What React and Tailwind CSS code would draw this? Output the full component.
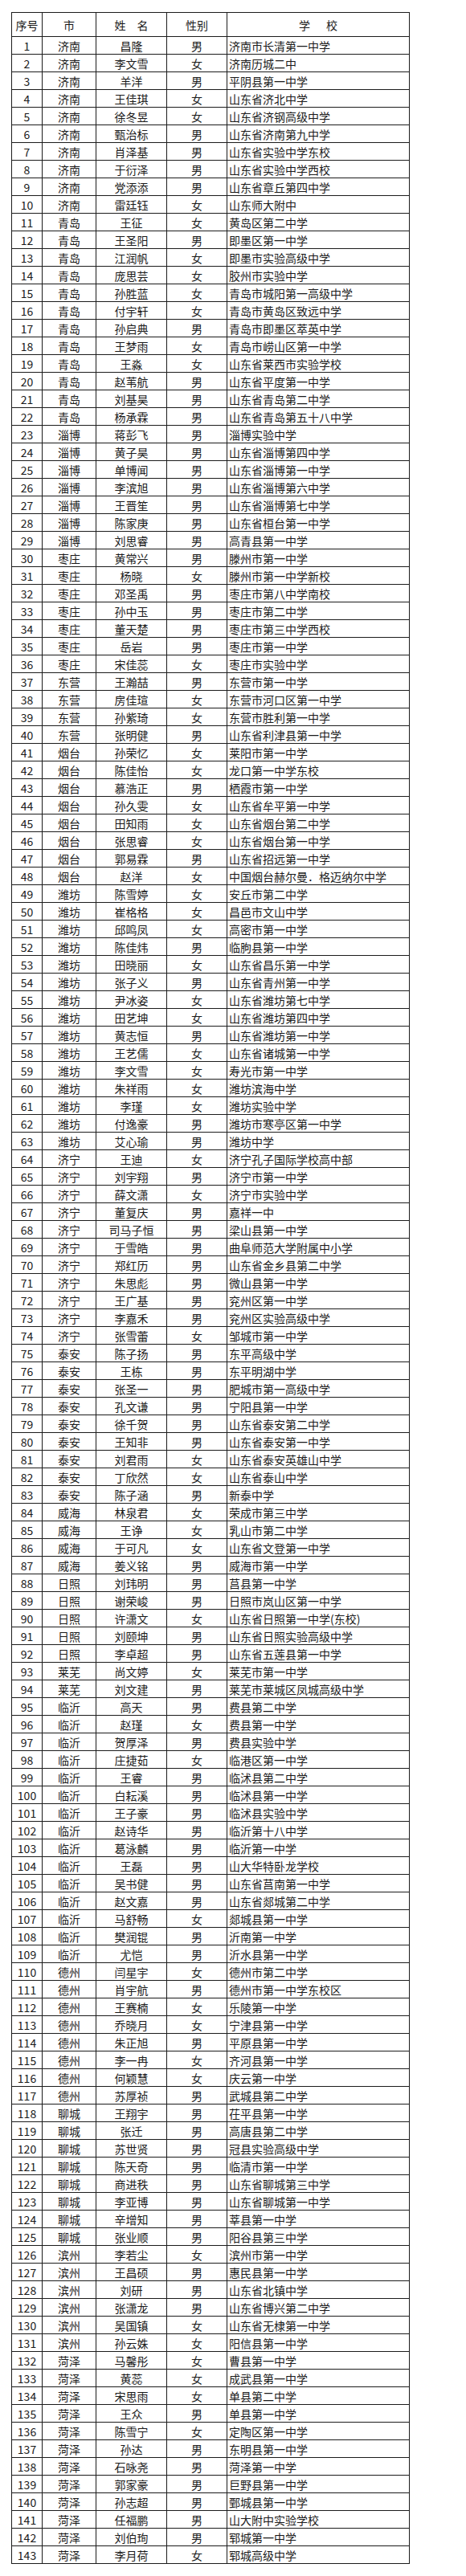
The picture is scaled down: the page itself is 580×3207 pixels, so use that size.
import React from "react";

// 城市|姓名|性别|学校
const raw = `济南|昌隆|男|济南市长清第一中学
济南|李文雪|女|济南历城二中
济南|羊洋|男|平阴县第一中学
济南|王佳琪|女|山东省济北中学
济南|徐冬昱|女|山东省济钢高级中学
济南|甄治标|男|山东省济南第九中学
济南|肖泽基|男|山东省实验中学东校
济南|于衍泽|男|山东省实验中学西校
济南|党添添|男|山东省章丘第四中学
济南|雷廷钰|女|山东师大附中
青岛|王征|女|黄岛区第二中学
青岛|王圣阳|男|即墨区第一中学
青岛|江润帆|女|即墨市实验高级中学
青岛|庞思芸|女|胶州市实验中学
青岛|孙胜蓝|女|青岛市城阳第一高级中学
青岛|付宇轩|女|青岛市黄岛区致远中学
青岛|孙启典|男|青岛市即墨区萃英中学
青岛|王梦雨|女|青岛市崂山区第一中学
青岛|王淼|女|山东省莱西市实验学校
青岛|赵苇航|男|山东省平度第一中学
青岛|刘基昊|男|山东省青岛第二中学
青岛|杨承霖|男|山东省青岛第五十八中学
淄博|蒋彭飞|男|淄博实验中学
淄博|黄子昊|男|山东省淄博第四中学
淄博|单博闻|男|山东省淄博第一中学
淄博|李滨旭|男|山东省淄博第六中学
淄博|王晋笙|男|山东省淄博第七中学
淄博|陈家庚|男|山东省桓台第一中学
淄博|刘思睿|男|高青县第一中学
枣庄|黄常兴|男|滕州市第一中学
枣庄|杨晓|女|滕州市第一中学新校
枣庄|邓圣禹|男|枣庄市第八中学南校
枣庄|孙中玉|男|枣庄市第二中学
枣庄|董天楚|男|枣庄市第三中学西校
枣庄|岳岩|男|枣庄市第一中学
枣庄|宋佳蕊|女|枣庄市实验中学
东营|王瀚喆|男|东营市第一中学
东营|房佳瑄|女|东营市河口区第一中学
东营|孙紫琦|女|东营市胜利第一中学
东营|张明健|男|山东省利津县第一中学
烟台|孙荣忆|女|莱阳市第一中学
烟台|陈佳怡|女|龙口第一中学东校
烟台|慕浩正|男|栖霞市第一中学
烟台|孙久雯|女|山东省牟平第一中学
烟台|田知雨|女|山东省烟台第二中学
烟台|张思睿|女|山东省烟台第一中学
烟台|郭易霖|男|山东省招远第一中学
烟台|赵洋|女|中国烟台赫尔曼．格迈纳尔中学
潍坊|陈雪婷|女|安丘市第二中学
潍坊|崔格格|女|昌邑市文山中学
潍坊|邱鸣凤|女|高密市第一中学
潍坊|陈佳炜|男|临朐县第一中学
潍坊|田晓丽|女|山东省昌乐第一中学
潍坊|张子义|男|山东省青州第一中学
潍坊|尹冰姿|女|山东省潍坊第七中学
潍坊|田艺坤|女|山东省潍坊第四中学
潍坊|黄志恒|男|山东省潍坊第一中学
潍坊|王艺儒|女|山东省诸城第一中学
潍坊|李文雪|女|寿光市第一中学
潍坊|朱祥雨|女|潍坊滨海中学
潍坊|李瑾|女|潍坊实验中学
潍坊|付逸豪|男|潍坊市寒亭区第一中学
潍坊|艾心瑜|男|潍坊中学
济宁|王迪|女|济宁孔子国际学校高中部
济宁|刘宇翔|男|济宁市第一中学
济宁|薛文潇|女|济宁市实验中学
济宁|董复庆|男|嘉祥一中
济宁|司马子恒|男|梁山县第一中学
济宁|于雪皓|男|曲阜师范大学附属中小学
济宁|郑红历|男|山东省金乡县第二中学
济宁|朱思彪|男|微山县第一中学
济宁|王广基|男|兖州区第一中学
济宁|李嘉禾|男|兖州区实验高级中学
济宁|张雪蕾|女|邹城市第一中学
泰安|陈子扬|男|东平高级中学
泰安|王栋|男|东平明湖中学
泰安|张圣一|男|肥城市第一高级中学
泰安|孔文谦|男|宁阳县第一中学
泰安|徐千贺|男|山东省泰安第二中学
泰安|王知非|男|山东省泰安第一中学
泰安|刘君雨|女|山东省泰安英雄山中学
泰安|丁欣然|女|山东省泰山中学
泰安|陈子涵|男|新泰中学
威海|林泉君|女|荣成市第三中学
威海|王诤|女|乳山市第二中学
威海|于可凡|女|山东省文登第一中学
威海|姜义铭|男|威海市第一中学
日照|刘玮明|男|莒县第一中学
日照|谢荣峻|男|日照市岚山区第一中学
日照|许潇文|女|山东省日照第一中学(东校)
日照|刘颐坤|男|山东省日照实验高级中学
日照|李卓超|男|山东省五莲县第一中学
莱芜|尚文婷|女|莱芜市第一中学
莱芜|刘文建|男|莱芜市莱城区凤城高级中学
临沂|高天|男|费县第二中学
临沂|赵瑾|女|费县第一中学
临沂|贺厚泽|男|费县实验中学
临沂|庄捷茹|女|临港区第一中学
临沂|王睿|男|临沭县第二中学
临沂|白耘溪|男|临沭县第一中学
临沂|王子豪|男|临沭县实验中学
临沂|赵诗华|男|临沂第十八中学
临沂|葛泳麟|男|临沂第一中学
临沂|王磊|男|山大华特卧龙学校
临沂|吴书健|男|山东省莒南第一中学
临沂|赵文嘉|男|山东省郯城第二中学
临沂|马舒畅|女|郯城县第一中学
临沂|樊润锟|男|沂南第一中学
临沂|尤恺|男|沂水县第一中学
德州|闫星宇|女|德州市第二中学
德州|肖宇航|男|德州市第一中学东校区
德州|王赛楠|女|乐陵第一中学
德州|乔晓月|女|宁津县第一中学
德州|朱正旭|男|平原县第一中学
德州|李一冉|女|齐河县第一中学
德州|何颖慧|女|庆云第一中学
德州|苏厚祯|男|武城县第二中学
聊城|王翔宇|男|茌平县第一中学
聊城|张迁|男|高唐县第二中学
聊城|苏世贤|男|冠县实验高级中学
聊城|陈天奇|男|临清市第一中学
聊城|商进秩|男|山东省聊城第三中学
聊城|李亚博|男|山东省聊城第一中学
聊城|辛增知|男|莘县第一中学
聊城|张业顺|男|阳谷县第三中学
滨州|李若尘|女|滨州市第一中学
滨州|王昌硕|男|惠民县第一中学
滨州|刘研|男|山东省北镇中学
滨州|张潇龙|男|山东省博兴第二中学
滨州|吴国镇|女|山东省无棣第一中学
滨州|孙云姝|女|阳信县第一中学
菏泽|马馨彤|女|曹县第一中学
菏泽|黄蕊|女|成武县第一中学
菏泽|宋思雨|女|单县第二中学
菏泽|王众|男|单县第一中学
菏泽|陈雪宁|女|定陶区第一中学
菏泽|孙达|男|东明县第一中学
菏泽|石咏尧|男|菏泽第一中学
菏泽|郭家豪|男|巨野县第一中学
菏泽|孙志超|男|鄄城县第一中学
菏泽|任福鹏|男|山大附中实验学校
菏泽|刘伯珣|男|郓城第一中学
菏泽|李月荷|女|郓城高级中学`;

const students = raw.split("\n").map((line, i) => {
  const [city, name, gender, school] = line.split("|");
  return { id: i + 1, city, name, gender, school };
});

const cols = "grid grid-cols-[38px_67px_88px_75px_226px]";
const cell = "flex items-center justify-center border-r border-[#1c1c1c]";

export default function App() {
  return (
    <div className="min-h-[3207px] bg-white pt-[15px] pl-[14px] font-['Noto_Sans_CJK_SC','Noto_Sans',sans-serif] text-[14px] leading-none text-[#1a1a1a]">
      <div className="w-[496px] border-x border-t border-[#1c1c1c]">
        {/* header */}
        <div className={`${cols} h-[30px] border-b border-[#1c1c1c]`}>
          <div className={cell}>序号</div>
          <div className={cell}>市</div>
          <div className={`${cell} gap-[14px]`}>
            <span>姓</span>
            <span>名</span>
          </div>
          <div className={cell}>性别</div>
          <div className="flex items-center justify-center gap-[20px]">
            <span>学</span>
            <span>校</span>
          </div>
        </div>

        {students.map((s) => (
          <div key={s.id} className={`${cols} h-[22px] border-b border-[#1c1c1c]`}>
            <div className={cell}>{s.id}</div>
            <div className={cell}>{s.city}</div>
            <div className={cell}>{s.name}</div>
            <div className={cell}>{s.gender}</div>
            <div className="flex items-center whitespace-nowrap pl-[2px]">{s.school}</div>
          </div>
        ))}
      </div>
    </div>
  );
}
